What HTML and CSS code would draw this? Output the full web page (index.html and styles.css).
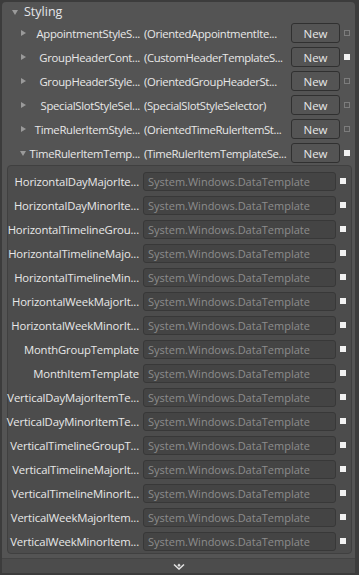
FILE: index.html
```html
<!DOCTYPE html>
<html>
<head>
<meta charset="UTF-8">
<title>Styling</title>
<link rel="stylesheet" href="styles.css">
</head>
<body>
	<div class="panel">
		<div class="header"><span class="arrow-down"></span>Styling</div>

		<div class="row">
			<span class="arrow-right"></span>
			<span class="label">AppointmentStyleS...</span>
			<span class="value">(OrientedAppointmentIte...</span>
			<button class="btn">New</button>
			<span class="check"></span>
		</div>
		<div class="row">
			<span class="arrow-right"></span>
			<span class="label">GroupHeaderCont...</span>
			<span class="value">(CustomHeaderTemplateS...</span>
			<button class="btn">New</button>
			<span class="check on"></span>
		</div>
		<div class="row">
			<span class="arrow-right"></span>
			<span class="label">GroupHeaderStyle...</span>
			<span class="value">(OrientedGroupHeaderSt...</span>
			<button class="btn">New</button>
			<span class="check"></span>
		</div>
		<div class="row">
			<span class="arrow-right"></span>
			<span class="label">SpecialSlotStyleSel...</span>
			<span class="value">(SpecialSlotStyleSelector)</span>
			<button class="btn">New</button>
			<span class="check"></span>
		</div>
		<div class="row">
			<span class="arrow-right"></span>
			<span class="label">TimeRulerItemStyle...</span>
			<span class="value">(OrientedTimeRulerItemSt...</span>
			<button class="btn">New</button>
			<span class="check"></span>
		</div>
		<div class="row">
			<span class="arrow-down small"></span>
			<span class="label">TimeRulerItemTemp...</span>
			<span class="value">(TimeRulerItemTemplateSe...</span>
			<button class="btn">New</button>
			<span class="check on"></span>
		</div>

		<div class="sub">
			<div class="subrow"><span class="label">HorizontalDayMajorIte...</span><span class="box">System.Windows.DataTemplate</span><span class="check on"></span></div>
			<div class="subrow"><span class="label">HorizontalDayMinorIte...</span><span class="box">System.Windows.DataTemplate</span><span class="check on"></span></div>
			<div class="subrow"><span class="label">HorizontalTimelineGrou...</span><span class="box">System.Windows.DataTemplate</span><span class="check on"></span></div>
			<div class="subrow"><span class="label">HorizontalTimelineMajo...</span><span class="box">System.Windows.DataTemplate</span><span class="check on"></span></div>
			<div class="subrow"><span class="label">HorizontalTimelineMin...</span><span class="box">System.Windows.DataTemplate</span><span class="check on"></span></div>
			<div class="subrow"><span class="label">HorizontalWeekMajorIt...</span><span class="box">System.Windows.DataTemplate</span><span class="check on"></span></div>
			<div class="subrow"><span class="label">HorizontalWeekMinorIt...</span><span class="box">System.Windows.DataTemplate</span><span class="check on"></span></div>
			<div class="subrow"><span class="label">MonthGroupTemplate</span><span class="box">System.Windows.DataTemplate</span><span class="check on"></span></div>
			<div class="subrow"><span class="label">MonthItemTemplate</span><span class="box">System.Windows.DataTemplate</span><span class="check on"></span></div>
			<div class="subrow"><span class="label">VerticalDayMajorItemTe...</span><span class="box">System.Windows.DataTemplate</span><span class="check on"></span></div>
			<div class="subrow"><span class="label">VerticalDayMinorItemTe...</span><span class="box">System.Windows.DataTemplate</span><span class="check on"></span></div>
			<div class="subrow"><span class="label">VerticalTimelineGroupT...</span><span class="box">System.Windows.DataTemplate</span><span class="check on"></span></div>
			<div class="subrow"><span class="label">VerticalTimelineMajorIt...</span><span class="box">System.Windows.DataTemplate</span><span class="check on"></span></div>
			<div class="subrow"><span class="label">VerticalTimelineMinorIt...</span><span class="box">System.Windows.DataTemplate</span><span class="check on"></span></div>
			<div class="subrow"><span class="label">VerticalWeekMajorItem...</span><span class="box">System.Windows.DataTemplate</span><span class="check on"></span></div>
			<div class="subrow"><span class="label">VerticalWeekMinorItem...</span><span class="box">System.Windows.DataTemplate</span><span class="check on"></span></div>
		</div>

		<div class="footer">
			<svg width="12" height="7" viewBox="0 0 12 7">
				<polyline points="1,1.5 6,6 11,1.5" fill="none" stroke="#e2e2e2" stroke-width="1.6"/>
				<polygon points="6,0.5 7.6,2.2 6,3.9 4.4,2.2" fill="#e2e2e2"/>
			</svg>
		</div>
	</div>
</body>
</html>
```

FILE: styles.css
```css
body {
	margin: 0;
	background-color: #3c3c3c;
	font-family: "Open Sans", "Noto Sans", sans-serif;
	font-size: 11.3px;
	letter-spacing: -0.15px;
	color: #e8e8e8;
}

.panel {
	width: 353px;
	margin: 2px 0 0 2px;
	background-color: #545454;
	border-radius: 4px 4px 0 0;
}

.header {
	height: 19px;
	display: flex;
	align-items: center;
	padding-left: 10px;
	font-size: 12.5px;
	letter-spacing: 0;
	color: #e4e6ea;
}

.arrow-down {
	width: 0;
	height: 0;
	border-left: 3px solid transparent;
	border-right: 3px solid transparent;
	border-top: 5px solid #9a9a9a;
	margin-right: 6px;
	margin-top: 1px;
}

.arrow-right {
	justify-self: end;
	width: 0;
	height: 0;
	border-top: 3px solid transparent;
	border-bottom: 3px solid transparent;
	border-left: 5px solid #9a9a9a;
}

.arrow-down.small {
	justify-self: end;
	margin: 0;
}

.row {
	height: 24px;
	display: grid;
	grid-template-columns: 24px 110px 143px 49px 6px;
	column-gap: 4px;
	align-items: center;
}

.label {
	display: flex;
	justify-content: flex-end;
	white-space: nowrap;
	min-width: 0;
}

.row .label {
	letter-spacing: -0.3px;
}

.value {
	white-space: nowrap;
	overflow: hidden;
	letter-spacing: -0.35px;
}

.btn {
	height: 20px;
	padding: 0;
	background-color: #545454;
	border: 1px solid #303030;
	border-radius: 3px;
	font-family: inherit;
	font-size: 11.5px;
	letter-spacing: 0;
	color: #e8e8e8;
}

.check {
	width: 6px;
	height: 6px;
	box-sizing: border-box;
	border: 1px solid #7c7c7c;
}

.check.on {
	background-color: #f2f2f2;
	border-color: #f2f2f2;
}

.sub {
	margin: 0 3px 0 5px;
	padding-top: 3px;
	background-color: #4c4c4c;
	border: 1px solid #404040;
	border-radius: 4px;
}

.subrow {
	height: 24px;
	display: grid;
	grid-template-columns: 131px 193px 6px;
	column-gap: 4px;
	align-items: center;
}

.box {
	height: 19px;
	box-sizing: border-box;
	padding-left: 4px;
	line-height: 17px;
	background-color: #444444;
	border: 1px solid #383838;
	border-radius: 3px;
	color: #8c8c8c;
	font-size: 11px;
	letter-spacing: 0;
	white-space: nowrap;
	overflow: hidden;
}

.footer {
	margin-top: 4px;
	height: 14px;
	border-top: 1px solid #444444;
	background-color: #4c4c4c;
	display: flex;
	justify-content: center;
	align-items: center;
}
```
